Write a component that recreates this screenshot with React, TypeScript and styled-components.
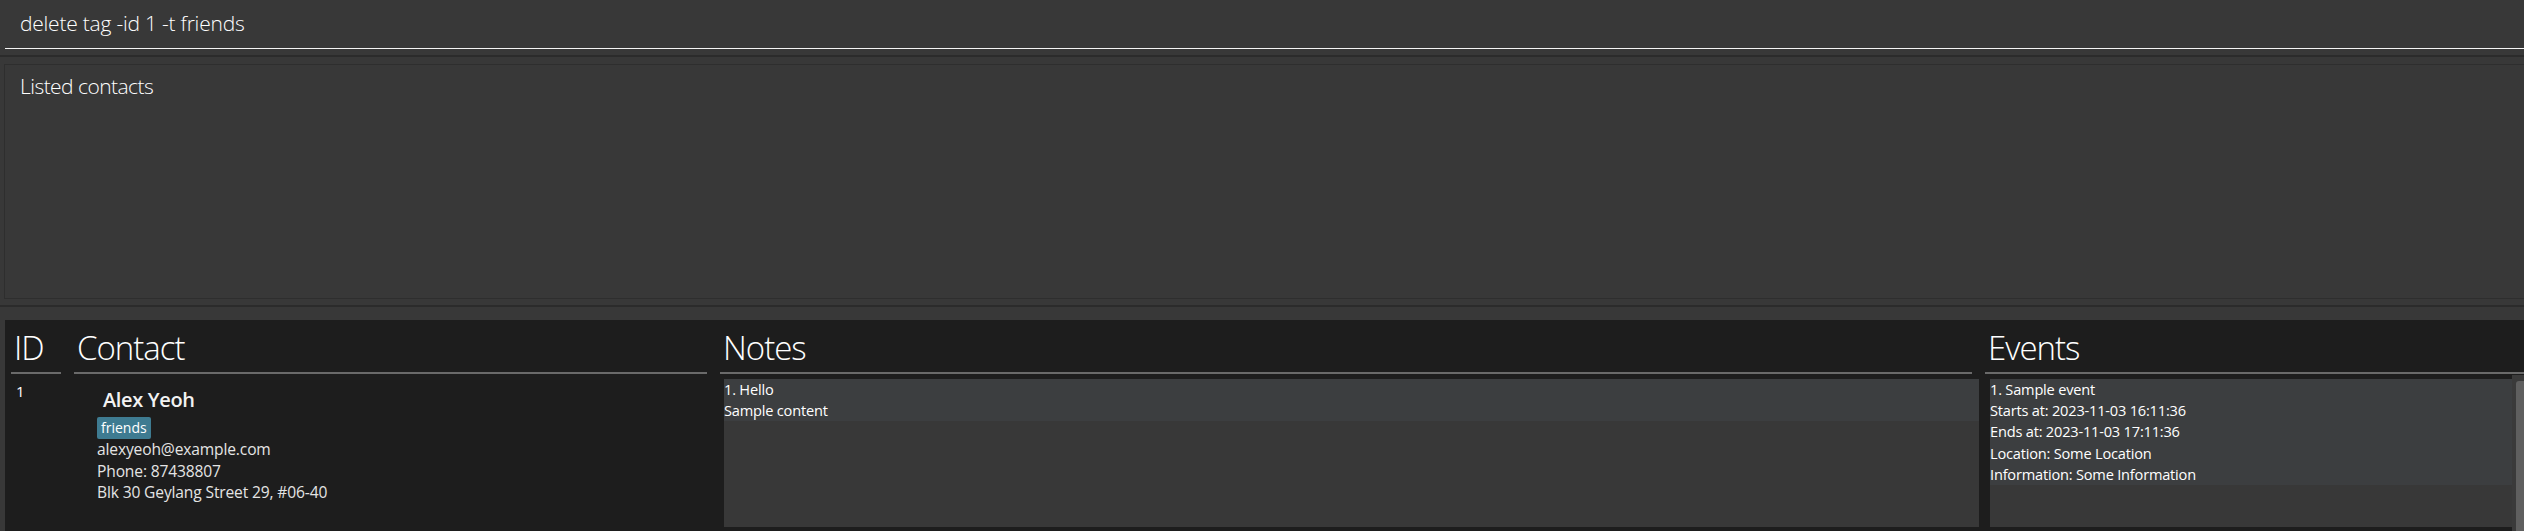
import React from 'react';
import styled, { createGlobalStyle } from 'styled-components';

const Global = createGlobalStyle`
  html, body { margin: 0; padding: 0; background: #383838; }
  body {
    width: 2524px; height: 531px; overflow: hidden;
    font-family: "Open Sans", "Noto Sans", sans-serif;
    -webkit-font-smoothing: antialiased;
  }
  #root { height: 100%; }
`;

const Window = styled.div`
  display: flex;
  flex-direction: column;
  height: 531px;
  background: #383838;
  color: #ffffff;
`;

const CommandBar = styled.div`
  height: 55px;
  padding-left: 5px;
  box-sizing: border-box;
`;

const CommandField = styled.div`
  height: 49px;
  box-sizing: border-box;
  border-bottom: 1px solid #f4f4f4;
  padding: 11px 0 0 15px;
  font-size: 21px;
  font-weight: 300;
  letter-spacing: -0.22px;
  line-height: 24px;
  white-space: pre;
`;

const Divider = styled.div<{ $before: number; $after: number }>`
  height: 2px;
  background: #2b2b2b;
  margin-top: ${(p) => p.$before}px;
  margin-bottom: ${(p) => p.$after}px;
`;

const ResultBox = styled.div`
  height: 235px;
  margin-left: 4px;
  box-sizing: border-box;
  border: 1px solid #2e2e2e;
  border-right: none;
  padding: 7px 0 0 15px;
  font-size: 21px;
  font-weight: 300;
  letter-spacing: -0.55px;
  line-height: 29px;
`;

const ListArea = styled.div`
  flex: 1;
  margin-left: 5px;
  background: #1d1d1d;
  display: flex;
  gap: 13px;
  padding-left: 6px;
  min-height: 0;
`;

const Column = styled.div<{ $width?: number }>`
  display: flex;
  flex-direction: column;
  ${(p) => (p.$width ? `width: ${p.$width}px; flex: none;` : 'flex: 1; min-width: 0;')}
`;

const Header = styled.div`
  height: 52px;
  box-sizing: border-box;
  padding: 8px 0 0 3px;
  font-size: 33px;
  font-weight: 300;
  letter-spacing: -1px;
  line-height: 40px;
  color: #ffffff;
`;

const Underline = styled.div`
  height: 2px;
  background: #6a6a6a;
  margin-bottom: 5px;
`;

const IdCell = styled.div`
  padding: 3px 0 0 5px;
  font-size: 15px;
  line-height: 18px;
  color: #ffffff;
`;

const ContactCard = styled.div`
  padding: 8px 0 0 23px;
  display: flex;
  flex-direction: column;
  align-items: flex-start;
`;

const Name = styled.div`
  padding-left: 6px;
  font-size: 20px;
  font-weight: 600;
  letter-spacing: -0.35px;
  line-height: 26px;
  color: #f2f2f2;
`;

const Tag = styled.span`
  margin-top: 4px;
  height: 22px;
  padding: 0 4px;
  border-radius: 2px;
  background: #3e7b91;
  color: #ffffff;
  font-size: 14px;
  line-height: 22px;
`;

const Detail = styled.div`
  font-size: 15.6px;
  letter-spacing: -0.15px;
  line-height: 21.6px;
  color: #e4e4e4;
`;

const ListPane = styled.div<{ $inset: number; $overhang?: number }>`
  flex: 1;
  display: flex;
  min-height: 0;
  margin-left: ${(p) => p.$inset}px;
  margin-right: ${(p) => -(p.$overhang ?? 0)}px;
  margin-bottom: 4px;
`;

const ListBody = styled.div`
  flex: 1;
  min-width: 0;
  background: #383838;
`;

const Card = styled.div`
  background: #3c3e40;
`;

const Line = styled.div`
  font-size: 14.6px;
  letter-spacing: -0.2px;
  line-height: 21.2px;
  color: #ffffff;
  white-space: nowrap;
`;

const ScrollTrack = styled.div`
  width: 12px;
  margin-top: -4px;
  margin-bottom: -4px;
  background: #3a3a3a;
  padding: 6px 0 0 4px;
  box-sizing: border-box;
  display: flex;
`;

const ScrollThumb = styled.div`
  flex: 1;
  background: #5f5f5f;
  border-radius: 3px 0 0 0;
`;

const notes = ['1. Hello', 'Sample content'];
const events = [
  '1. Sample event',
  'Starts at: 2023-11-03 16:11:36',
  'Ends at: 2023-11-03 17:11:36',
  'Location: Some Location',
  'Information: Some Information',
];

export default function App() {
  return (
    <>
      <Global />
      <Window>
        <CommandBar>
          <CommandField>delete tag -id 1 -t friends</CommandField>
        </CommandBar>
        <Divider $before={0} $after={7} />
        <ResultBox>Listed contacts</ResultBox>
        <Divider $before={6} $after={13} />
        <ListArea>
          <Column $width={50}>
            <Header>ID</Header>
            <Underline />
            <IdCell>1</IdCell>
          </Column>
          <Column $width={633}>
            <Header>Contact</Header>
            <Underline />
            <ContactCard>
              <Name>Alex Yeoh</Name>
              <Tag>friends</Tag>
              <Detail>alexyeoh@example.com</Detail>
              <Detail>Phone: 87438807</Detail>
              <Detail>Blk 30 Geylang Street 29, #06-40</Detail>
            </ContactCard>
          </Column>
          <Column $width={1252}>
            <Header>Notes</Header>
            <Underline />
            <ListPane $inset={4} $overhang={7}>
              <ListBody>
                <Card>
                  {notes.map((n) => (
                    <Line key={n}>{n}</Line>
                  ))}
                </Card>
              </ListBody>
            </ListPane>
          </Column>
          <Column>
            <Header>Events</Header>
            <Underline />
            <ListPane $inset={5}>
              <ListBody>
                <Card>
                  {events.map((e) => (
                    <Line key={e}>{e}</Line>
                  ))}
                </Card>
              </ListBody>
              <ScrollTrack>
                <ScrollThumb />
              </ScrollTrack>
            </ListPane>
          </Column>
        </ListArea>
      </Window>
    </>
  );
}
